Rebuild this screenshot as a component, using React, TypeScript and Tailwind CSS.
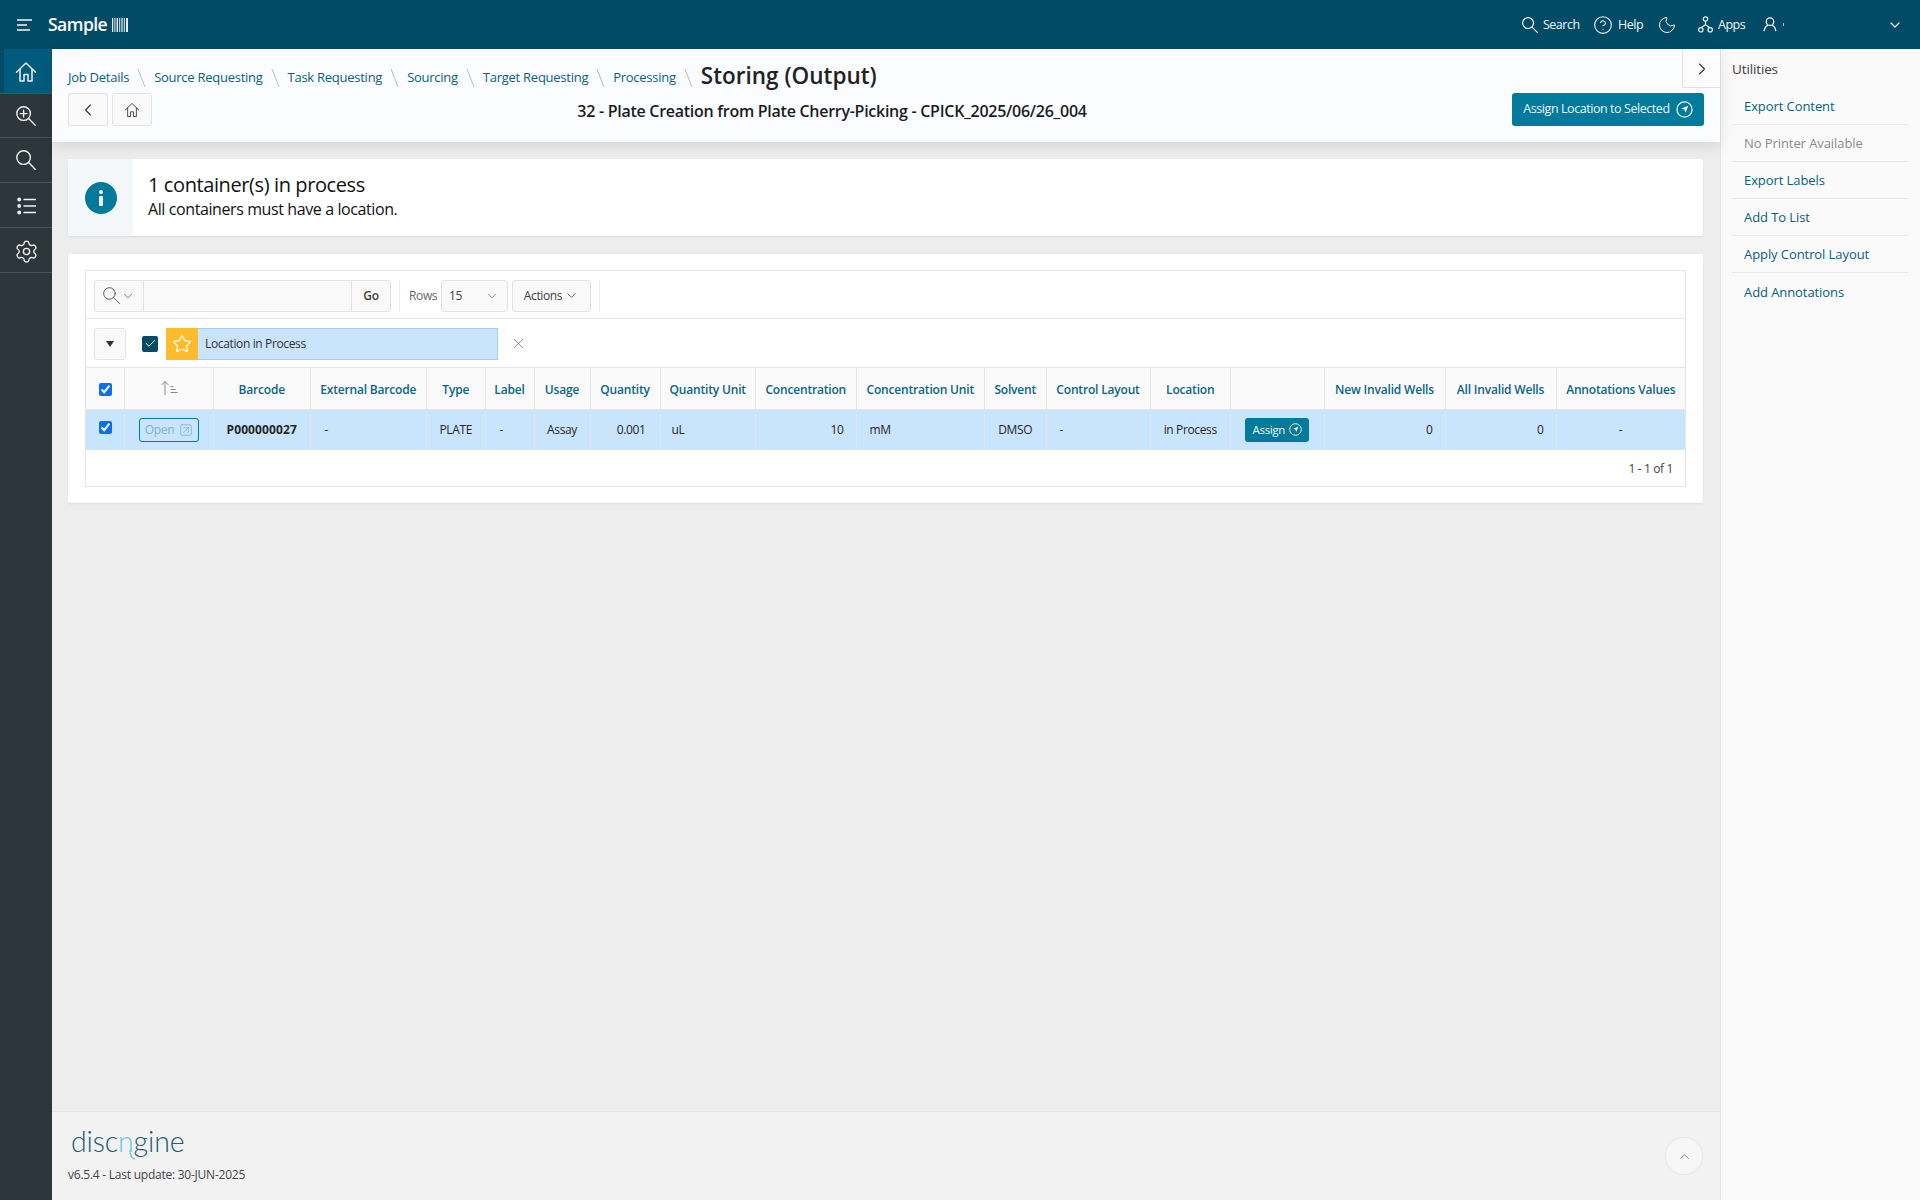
import React from "react";
import { ChevronDown, ChevronLeft, ChevronRight, CircleHelp, Moon, Settings, SquareArrowUpRight, X, Star, Check, ChevronUp } from "lucide-react";

const font = { fontFamily: '"Open Sans","Noto Sans",sans-serif' };

function MagIcon({ size = 20, plus = false, sw = 1.4 }: { size?: number; plus?: boolean; sw?: number }) {
  return (
    <svg width={size} height={size} viewBox="0 0 20 20" fill="none" stroke="currentColor" strokeWidth={sw} strokeLinecap="round" className="shrink-0">
      <circle cx="7.6" cy="7.6" r="6.8" />
      <path d="M12.6 12.6L19.2 19.2" />
      {plus ? <path d="M7.6 4.2V11M4.2 7.6H11" /> : null}
    </svg>
  );
}

function HomeIcon({ size = 21, sw = 1.5 }: { size?: number; sw?: number }) {
  return (
    <svg width={size} height={size} viewBox="0 0 22 22" fill="none" stroke="currentColor" strokeWidth={sw} strokeLinejoin="round" strokeLinecap="round" className="shrink-0">
      <path d="M1.5 11.2L11 2L20.5 11.2" />
      <path d="M5 8.5V20H9V13.5H13V20H17V8.5" />
    </svg>
  );
}

function ListIcon() {
  return (
    <svg width="19" height="18" viewBox="0 0 19 18" fill="none" stroke="currentColor" strokeWidth="1.5" className="shrink-0">
      <circle cx="2.2" cy="2.5" r="1.9" fill="currentColor" stroke="none" />
      <circle cx="2.2" cy="9" r="1.9" fill="currentColor" stroke="none" />
      <circle cx="2.2" cy="15.5" r="1.9" fill="currentColor" stroke="none" />
      <path d="M6.5 2.5H19M6.5 9H19M6.5 15.5H19" />
    </svg>
  );
}

function NavCircle({ size = 16 }: { size?: number }) {
  return (
    <svg width={size} height={size} viewBox="0 0 16 16" fill="none" className="shrink-0">
      <circle cx="8" cy="8" r="7.1" stroke="currentColor" strokeWidth="1.2" />
      <path d="M11.6 4.4 L9 11 L7.9 8.1 L5 7 Z" fill="currentColor" />
    </svg>
  );
}

function AppsIcon() {
  return (
    <svg width="15" height="17" viewBox="0 0 15 17" fill="none" stroke="currentColor" strokeWidth="1.2" className="shrink-0">
      <circle cx="7.5" cy="3" r="2.2" />
      <circle cx="2.8" cy="13.8" r="2.2" />
      <circle cx="12.2" cy="13.8" r="2.2" />
      <path d="M7.5 5.2V8.8M7.5 8.8L3.4 11.6M7.5 8.8L11.6 11.6" />
    </svg>
  );
}

function UserIcon() {
  return (
    <svg width="14" height="15" viewBox="0 0 15 16" fill="none" stroke="currentColor" strokeWidth="1.4" className="shrink-0">
      <circle cx="7.5" cy="5" r="4" />
      <path d="M1.2 15c.6-3.2 2.6-5.6 4-6M13.8 15c-.6-3.2-2.6-5.6-4-6" />
    </svg>
  );
}

function SortIcon() {
  return (
    <svg width="18" height="16" viewBox="0 0 18 16" fill="none" stroke="#8a8a8a" strokeWidth="1" className="shrink-0">
      <path d="M5 15V1.5M1.5 5L5 1.5L8.5 5" />
      <path d="M10.5 6.5h3M10.5 9.5h5M10.5 12.5h7" />
    </svg>
  );
}

function Barcode() {
  return (
    <svg width="17" height="14" viewBox="0 0 17 14" fill="#e6edf0" className="shrink-0">
      <rect x="0" width="1.2" height="14" />
      <rect x="2.4" width="1" height="14" />
      <rect x="4.6" width="1.4" height="14" />
      <rect x="7.2" width="1" height="14" />
      <rect x="9.4" width="1.2" height="14" />
      <rect x="11.8" width="1" height="14" />
      <rect x="14" width="2" height="14" />
    </svg>
  );
}

const crumbs = ["Job Details", "Source Requesting", "Task Requesting", "Sourcing", "Target Requesting", "Processing"];
const utilities = ["Export Content", "No Printer Available", "Export Labels", "Add To List", "Apply Control Layout", "Add Annotations"];
const widths = ["w-[38.5px]", "w-[89px]", "w-[96.5px]", "w-[116.5px]", "w-[58.5px]", "w-[49px]", "w-[56px]", "w-[70px]", "w-[95.5px]", "w-[100.5px]", "w-[128.5px]", "w-[61.5px]", "w-[104px]", "w-[80.5px]", "w-[93.5px]", "w-[121px]", "w-[111px]", "w-[129px]"];
const heads = ["Barcode", "External Barcode", "Type", "Label", "Usage", "Quantity", "Quantity Unit", "Concentration", "Concentration Unit", "Solvent", "Control Layout", "Location", "", "New Invalid Wells", "All Invalid Wells", "Annotations Values"];

const th = "border-r border-[#e4e4e4] px-0 pt-[3px] text-center text-[12px] font-semibold tracking-[-0.015em] text-[#0a6585] whitespace-nowrap last:border-r-0";
const td = "border-r border-[#dde6ee] text-[12px] tracking-[-0.03em] text-[#262626] whitespace-nowrap";

export default function App() {
  return (
    <div className="flex h-[1200px] w-[1920px] flex-col overflow-hidden bg-[#ededed]" style={font}>
      <header className="flex h-[49px] shrink-0 items-center bg-[#014b66] text-[#f2f6f8]">
        <div className="flex w-[48px] justify-center">
          <svg width="17" height="14" viewBox="0 0 17 14" stroke="currentColor" strokeWidth="1.6">
            <path d="M1 2h15M1 7h10M1 12h13" />
          </svg>
        </div>
        <div className="flex items-center gap-[5px]">
          <span className="text-[17.5px] font-semibold tracking-[-0.03em] text-white">Sample</span>
          <Barcode />
        </div>
        <div className="flex-1" />
        <div className="flex items-center text-[12.5px] tracking-[-0.04em]">
          <div className="w-[22px] pl-[1px]"><MagIcon size={16} sw={1.5} /></div>
          <span className="w-[52px] pt-[2px]">Search</span>
          <div className="w-[23px]"><CircleHelp size={20} strokeWidth={1.3} className="-ml-[2px]" /></div>
          <span className="w-[41px] pt-[2px]">Help</span>
          <div className="w-[38px]"><Moon size={20} strokeWidth={1.2} className="-ml-[2px]" /></div>
          <div className="w-[21px] pl-[1px]"><AppsIcon /></div>
          <span className="w-[45px] pt-[2px]">Apps</span>
          <div className="w-[20px]"><UserIcon /></div>
          <span className="h-[3px] w-px bg-[#9fb9c4]" />
          <div className="w-[103px]" />
          <ChevronDown size={16} strokeWidth={1.8} />
          <div className="w-[17px]" />
        </div>
      </header>

      <div className="flex min-h-0 flex-1">
        <nav className="w-[52px] shrink-0 bg-[#2d353d] text-[#f0f2f4]">
          <div className="flex h-[44px] items-center justify-center border-l-4 border-[#024b66] bg-[#015b7c] pr-[4px] pt-[2px]">
            <HomeIcon size={22} />
          </div>
          <div className="flex h-[45px] items-center justify-center border-t border-b border-[#49525a] pt-[1px]">
            <MagIcon size={20} plus />
          </div>
          <div className="flex h-[45px] items-center justify-center border-b border-[#49525a]">
            <MagIcon size={20} />
          </div>
          <div className="flex h-[45px] items-center justify-center border-b border-[#49525a] pt-[2px]">
            <ListIcon />
          </div>
          <div className="flex h-[45px] items-center justify-center border-b border-[#49525a] pt-[2px]">
            <Settings size={25} strokeWidth={1.3} />
          </div>
        </nav>

        <main className="relative flex min-w-0 flex-1 flex-col">
          <div className="relative z-10 h-[93px] shrink-0 bg-[#fbfcff] pl-[16px] pt-[11px] pr-[16px] shadow-[0_4px_14px_rgba(0,0,0,0.1)]">
            <div className="flex h-[33px] items-center pt-[2px]">
              {crumbs.map((c) => (
                <React.Fragment key={c}>
                  <span className="text-[13px] tracking-[-0.02em] text-[#0b5f7b]">{c}</span>
                  <svg width="25" height="22" viewBox="0 0 25 22" stroke="#b5bcc2" strokeWidth="1" className="shrink-0">
                    <path d="M9 2l7 18" />
                  </svg>
                </React.Fragment>
              ))}
              <span className="-mt-[3px] text-[22.5px] font-semibold leading-none text-[#222]">Storing (Output)</span>
            </div>
            <div className="flex items-center">
              <button className="flex h-[33px] w-[40px] items-center justify-center rounded-[3px] border border-[#e2e2e2] bg-[#f9f9f9] text-[#333]">
                <ChevronLeft size={20} strokeWidth={1.3} />
              </button>
              <button className="ml-[4px] flex h-[33px] w-[40px] items-center justify-center rounded-[3px] border border-[#e2e2e2] bg-[#f9f9f9] text-[#333]">
                <HomeIcon size={16} sw={1.2} />
              </button>
              <div className="ml-[425px] w-[510px] whitespace-nowrap pt-[2px] text-center text-[16px] font-semibold tracking-[-0.017em] text-[#1c1c1c]">
                32 - Plate Creation from Plate Cherry-Picking - CPICK_2025/06/26_004
              </div>
              <div className="flex-1" />
              <button className="flex h-[33px] w-[192px] items-center justify-center gap-[6px] rounded-[3px] bg-[#017a9b] text-[12.5px] tracking-[-0.035em] text-[#eef7fa]">
                Assign Location to Selected
                <NavCircle size={17} />
              </button>
            </div>
          </div>

          <div className="flex-1 bg-[#ededed] pl-[16px] pr-[17px] pt-[17px]">
            <section className="flex h-[77px] rounded-[2px] bg-white shadow-[0_1px_2px_rgba(0,0,0,0.08)]">
              <div className="flex w-[65px] items-center justify-center bg-[#f3f7fa]">
                <div className="flex h-[32px] w-[32px] flex-col items-center justify-center gap-[2px] rounded-full bg-[#017a9b]">
                  <span className="h-[4px] w-[4px] rounded-full bg-white" />
                  <span className="h-[10px] w-[4px] rounded-[1px] bg-white" />
                </div>
              </div>
              <div className="flex flex-col justify-center pl-[15px] text-[#111]">
                <div className="text-[20px] font-medium leading-[22px] tracking-[-0.02em]">1 container(s) in process</div>
                <div className="pt-[1px] text-[16px] leading-[24px] tracking-[-0.025em]">All containers must have a location.</div>
              </div>
            </section>

            <section className="mt-[18px] h-[249px] rounded-[2px] bg-white px-[17px] py-[16px] shadow-[0_1px_2px_rgba(0,0,0,0.08)]">
              <div className="h-[217px] border border-[#e4e4e4]">
                <div className="flex h-[48px] items-center border-b border-[#e4e4e4] pl-[8px] pt-[2px] text-[12px] tracking-[-0.03em] text-[#404040]">
                  <div className="flex h-[32px] w-[297px] rounded-[3px] border border-[#e2e2e2] bg-[#f9f9f9]">
                    <div className="flex w-[49px] items-center justify-center gap-[1px] border-r border-[#e2e2e2]">
                      <MagIcon size={17} sw={1} />
                      <ChevronDown size={14} strokeWidth={1.2} />
                    </div>
                    <div className="flex-1" />
                    <div className="flex w-[39px] items-center justify-center border-l border-[#e2e2e2] font-semibold">Go</div>
                  </div>
                  <div className="ml-[8px] h-[32px] w-px bg-[#ececec]" />
                  <span className="ml-[9px] w-[32px] text-[#666]">Rows</span>
                  <div className="flex h-[32px] w-[67px] items-center justify-between rounded-[3px] border border-[#e2e2e2] bg-[#f9f9f9] pl-[7px] pr-[8px]">
                    15
                    <ChevronDown size={14} strokeWidth={1} />
                  </div>
                  <div className="ml-[4px] flex h-[32px] w-[79px] items-center justify-center gap-[2px] rounded-[3px] border border-[#e2e2e2] bg-[#f9f9f9]">
                    Actions
                    <ChevronDown size={15} strokeWidth={1.3} />
                  </div>
                  <div className="ml-[8px] h-[32px] w-px bg-[#ececec]" />
                </div>

                <div className="flex h-[49px] items-center border-b border-[#e4e4e4] pl-[8px] pt-[1px]">
                  <div className="flex h-[32px] w-[32px] items-center justify-center rounded-[3px] border border-[#e2e2e2] bg-[#f9f9f9]">
                    <span className="h-0 w-0 border-x-[4px] border-t-[6px] border-x-transparent border-t-[#333]" />
                  </div>
                  <span className="ml-[16px] flex h-[16px] w-[16px] items-center justify-center rounded-[2px] bg-[#014b66] text-white">
                    <Check size={13} strokeWidth={1.8} />
                  </span>
                  <div className="ml-[8px] flex h-[32px] w-[332px] border border-[#a9cdf0] bg-[#c9e4fd]">
                    <div className="-my-px -ml-px flex h-[32px] w-[32px] items-center justify-center bg-[#fdbb2d] text-white">
                      <Star size={20} strokeWidth={1.5} />
                    </div>
                    <span className="ml-[7px] self-center text-[12px] tracking-[-0.03em] text-[#333]">Location in Process</span>
                  </div>
                  <X size={17} strokeWidth={1} className="ml-[12px] text-[#666]" />
                </div>

                <table className="w-[1599px] table-fixed border-collapse">
                  <colgroup>
                    {widths.map((w, i) => (
                      <col key={i} className={w} />
                    ))}
                  </colgroup>
                  <thead>
                    <tr className="h-[41px] border-b border-[#e4e4e4] bg-[#fafafa]">
                      <th className="border-r border-[#e4e4e4] pt-[2px]">
                        <input type="checkbox" readOnly checked className="mx-auto block h-[13px] w-[13px] accent-[#0b6ff0]" />
                      </th>
                      <th className="border-r border-[#e4e4e4]">
                        <span className="flex justify-center"><SortIcon /></span>
                      </th>
                      {heads.map((h, i) => (
                        <th key={i} className={th}>{h}</th>
                      ))}
                    </tr>
                  </thead>
                  <tbody>
                    <tr className="h-[41px] bg-[#c9e4fd]">
                      <td className={td}>
                        <input type="checkbox" readOnly checked className="mx-auto -mt-[4px] block h-[13px] w-[13px] accent-[#0b6ff0]" />
                      </td>
                      <td className={td}>
                        <button className="mx-auto flex h-[24px] w-[60px] items-center justify-center gap-[5px] rounded-[3px] border border-[#017a9b] text-[12px] text-[#7fb4c7]">
                          Open
                          <SquareArrowUpRight size={14} strokeWidth={1.3} />
                        </button>
                      </td>
                      <td className={`${td} text-center font-bold tracking-[0.01em] text-[#111]`}>P000000027</td>
                      <td className={`${td} pl-[14px]`}>-</td>
                      <td className={`${td} text-center`}>PLATE</td>
                      <td className={`${td} pl-[14px]`}>-</td>
                      <td className={`${td} text-center`}>Assay</td>
                      <td className={`${td} pr-[14px] text-right`}>0.001</td>
                      <td className={`${td} pl-[11px]`}>uL</td>
                      <td className={`${td} pr-[12px] text-right`}>10</td>
                      <td className={`${td} pl-[13px]`}>mM</td>
                      <td className={`${td} text-center`}>DMSO</td>
                      <td className={`${td} pl-[13px]`}>-</td>
                      <td className={`${td} text-center`}>in Process</td>
                      <td className={td}>
                        <button className="mx-auto flex h-[24px] w-[64px] items-center justify-center gap-[4px] rounded-[3px] bg-[#017a9b] text-[11.5px] text-[#eef7fa]">
                          Assign
                          <NavCircle size={13} />
                        </button>
                      </td>
                      <td className={`${td} pr-[12px] text-right`}>0</td>
                      <td className={`${td} pr-[12px] text-right`}>0</td>
                      <td className="text-center text-[12px] text-[#262626]">-</td>
                    </tr>
                  </tbody>
                </table>
                <div className="flex h-[37px] items-center justify-end pr-[12px] text-[12px] tracking-[-0.03em] text-[#444]">1 - 1 of 1</div>
              </div>
            </section>
          </div>

          <footer className="relative h-[89px] shrink-0 border-t border-[#e6e6e6] bg-[#f2f2f2] pl-[16px]">
            <div className="ml-[3px] mt-[12px] flex h-[34px] items-center text-[28.5px] font-light leading-none tracking-[-0.005em] text-[#1c5d76]" style={{ fontFamily: '"Lato",sans-serif' }}>
              disc
              <span className="relative text-[#6cc5ea]">
                n
                <svg width="8" height="10" viewBox="0 0 8 10" fill="none" stroke="#6cc5ea" strokeWidth="1.4" className="absolute right-[-2px] top-[23px]">
                  <path d="M2 0C2 5 3 8 7 9" />
                </svg>
              </span>
              gine
            </div>
            <div className="mt-[8px] text-[12px] tracking-[-0.02em] text-[#444]">v6.5.4 - Last update: 30-JUN-2025</div>
            <button className="absolute right-[17px] top-[25px] flex h-[38px] w-[38px] items-center justify-center rounded-full border border-[#e8e8e8] bg-[#f7f7f7] text-[#555]">
              <ChevronUp size={15} strokeWidth={1.2} />
            </button>
          </footer>

          <button className="absolute right-0 top-0 z-20 flex h-[39px] w-[38px] items-center justify-center rounded-bl-[3px] border-b border-l border-[#e2e2e2] bg-[#fcfcfc] pt-[2px] text-[#333]">
            <ChevronRight size={20} strokeWidth={1.3} />
          </button>
        </main>

        <aside className="w-[200px] shrink-0 border-l border-[#e4e4e4] bg-[#fafafa] pl-[11px] pr-[12px]">
          <div className="flex h-[39px] items-center pt-[2px] text-[13.5px] font-medium tracking-[-0.01em] text-[#3c3c3c]">Utilities</div>
          {utilities.map((u, i) => (
            <div key={u} className={`flex h-[37px] items-center pl-[12px] pt-[2px] text-[13px] font-medium tracking-[-0.006em] ${i === 5 ? "" : "border-b border-[#e8e8e8]"} ${i === 1 ? "text-[#8a8a8a]" : "text-[#0b5f7b]"}`}>
              {u}
            </div>
          ))}
        </aside>
      </div>
    </div>
  );
}
